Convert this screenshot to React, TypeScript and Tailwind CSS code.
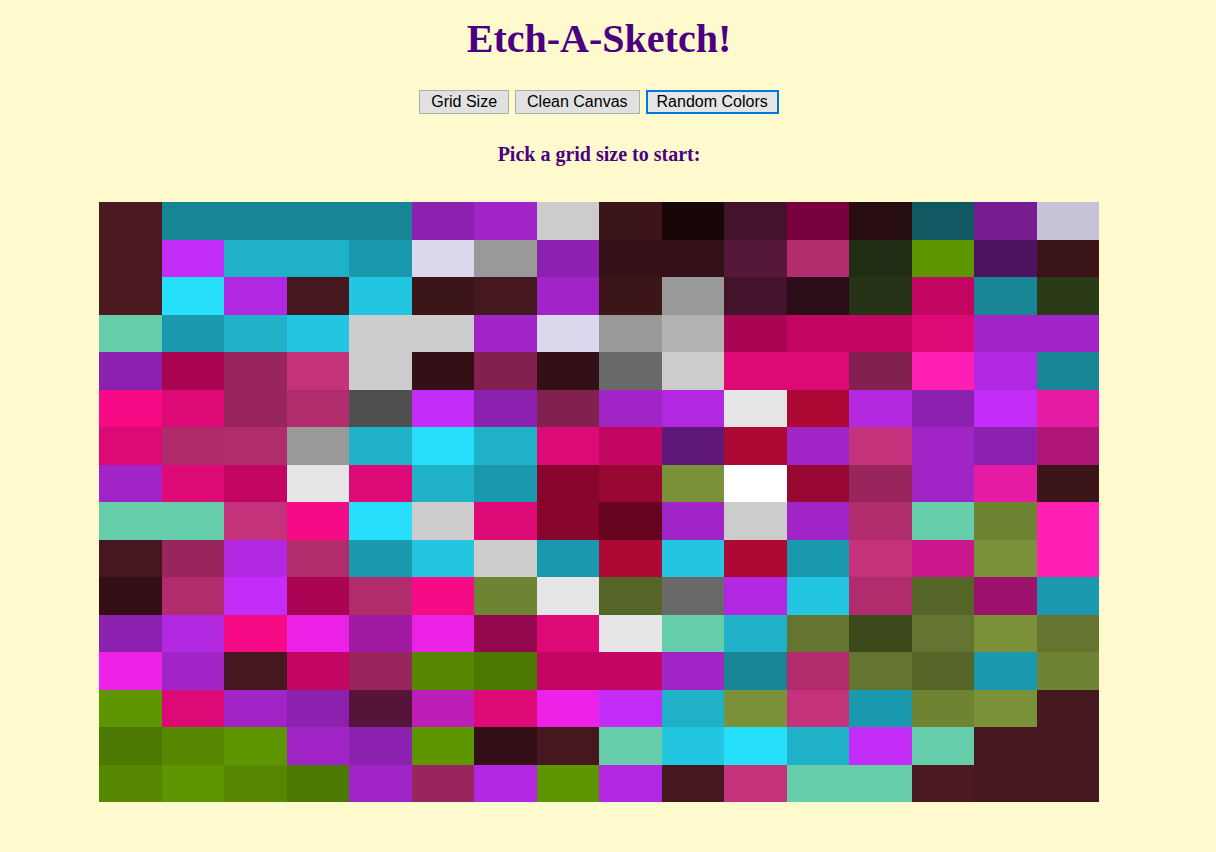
const ROWS: string[][] = [
  ['4b1a21', '188594', '188594', '188594', '188594', '8b21ae', 'a024c6', 'cccccc', '3c1519', '170708', '42132b', '7a0140', '270c10', '105962', '781c92', 'c6c3d6'],
  ['4b1a21', 'c42cf8', '1fb1c8', '1fb1c8', '1a98ae', 'dbd8ee', '999999', '8b21ae', '341116', '341116', '561839', 'b02c6c', '212c14', '5e9602', '4f1461', '3c1519'],
  ['4b1a21', '26dffb', 'b228e0', '45171f', '22c6e0', '3c1519', '45171f', 'a024c6', '3c1519', '999999', '42132b', '2b0d1a', '263317', 'c40663', '188594', '2b3b18'],
  ['66cdaa', '1a98ae', '1fb1c8', '22c6e0', 'cccccc', 'cccccc', 'a024c6', 'dbd8ee', '999999', 'b3b3b3', 'aa0455', 'c40663', 'c40663', 'dd0977', 'a024c6', 'a024c6'],
  ['8b21ae', 'a90452', '98265d', 'c4327b', 'cccccc', '341016', '822050', '341016', '696969', 'cccccc', 'dd0977', 'dd0977', '822050', 'ff1fb4', 'b228e0', '188594'],
  ['f70a85', 'dd0977', '98265d', 'b02c6c', '4f4f4f', 'c42cf8', '8b21ae', '822050', 'a024c6', 'b228e0', 'e5e5e5', 'ac0935', 'b428e0', '8b21ae', 'c42cf8', 'e51ba3'],
  ['dd0977', 'ae2c6a', 'b02c6c', '999999', '1fb1c8', '26dffb', '1fb1c8', 'dd0977', 'c40663', '601878', 'ac0935', 'a024c6', 'c4327b', 'a024c6', '8b21ae', 'b01578'],
  ['a024c6', 'dd0977', 'c40663', 'e5e5e5', 'dd0977', '1fb1c8', '1a98ae', '88052d', '990733', '7a9139', 'ffffff', '990733', '98265d', 'a024c6', 'e51ba3', '3c1519'],
  ['66cdaa', '66cdaa', 'c4327b', 'f70a85', '26dffb', 'cccccc', 'dd0977', '88052d', '66031f', 'a024c6', 'cccccc', 'a024c6', 'b02c6c', '66cdaa', '6e8432', 'ff1fb4'],
  ['45171f', '98265d', 'b228e0', 'b02c6c', '1a98ae', '22c6e0', 'cccccc', '1a98ae', 'ac0935', '22c6e0', 'ac0935', '1a98ae', 'c4327b', 'cc168e', '7a9139', 'ff1fb4'],
  ['341016', 'b02c6c', 'c42cf8', 'ac0455', 'b02c6c', 'f70a85', '6e8432', 'e5e5e5', '556528', '696969', 'b228e0', '22c6e0', 'b02c6c', '556528', '9b116b', '1a98ae'],
  ['8b21ae', 'b228e0', 'f70a85', 'ec22e6', 'a21aa2', 'ec22e6', '94064e', 'dd0977', 'e5e5e5', '66cdaa', '1fb1c8', '637531', '3c4a1b', '637531', '7a9139', '637531'],
  ['ec22e6', 'a024c6', '45171f', 'c40663', '98265d', '558800', '4b7800', 'c40663', 'c40663', 'a024c6', '188594', 'b02c6c', '637531', '556528', '1a98ae', '6e8432'],
  ['5e9602', 'dd0977', 'a024c6', '8b21ae', '561538', 'bc1eb6', 'dd0977', 'ec22e6', 'c42cf8', '1fb1c8', '7a9139', 'c4327b', '1a98ae', '6e8432', '7a9139', '45171f'],
  ['4b7800', '558800', '5e9602', 'a024c6', '8b21ae', '5e9602', '341016', '45171f', '66cdaa', '22c6e0', '26dffb', '1fb1c8', 'c42cf8', '66cdaa', '45171f', '45171f'],
  ['558800', '5e9602', '558800', '4b7800', 'a024c6', '98265d', 'b228e0', '5e9602', 'b228e0', '45171f', 'c4327b', '66cdaa', '66cdaa', '4b1a21', '45171f', '45171f'],
];

function Btn({ label, focused }: { label: string; focused?: boolean }) {
  return (
    <button
      className={
        focused
          ? 'h-[24px] px-[9px] bg-[#e5e5e5] border-2 border-[#0078d7] text-black text-[16px] leading-[18px] font-["Liberation_Sans",Arial,sans-serif]'
          : 'h-[24px] px-[11px] bg-[#e1e1e1] border border-[#adadad] text-black text-[16px] leading-[18px] font-["Liberation_Sans",Arial,sans-serif]'
      }
    >
      {label}
    </button>
  );
}

export default function App() {
  return (
    <div className="min-h-screen w-full bg-[#fffacd]">
      <div className="w-[1198px] flex flex-col items-center pb-10">
        <h1 className="mt-[16px] text-[40px] leading-[46px] font-bold text-[#4b0082] font-['Liberation_Serif','Times_New_Roman',serif]">
          Etch-A-Sketch!
        </h1>
        <div className="mt-[28px] flex gap-[6px]">
          <Btn label="Grid Size" />
          <Btn label="Clean Canvas" />
          <Btn label="Random Colors" focused />
        </div>
        <h3 className="mt-[28px] text-[20px] leading-[24px] font-bold text-[#4b0082] font-['Liberation_Serif','Times_New_Roman',serif]">
          Pick a grid size to start:
        </h3>
        <div className="mt-[36px] w-[1000px] h-[600px] grid grid-cols-16 grid-rows-16">
          {ROWS.flatMap((row, r) =>
            row.map((c, i) => (
              <div key={`${r}-${i}`} style={{ backgroundColor: `#${c}` }} />
            ))
          )}
        </div>
      </div>
    </div>
  );
}
